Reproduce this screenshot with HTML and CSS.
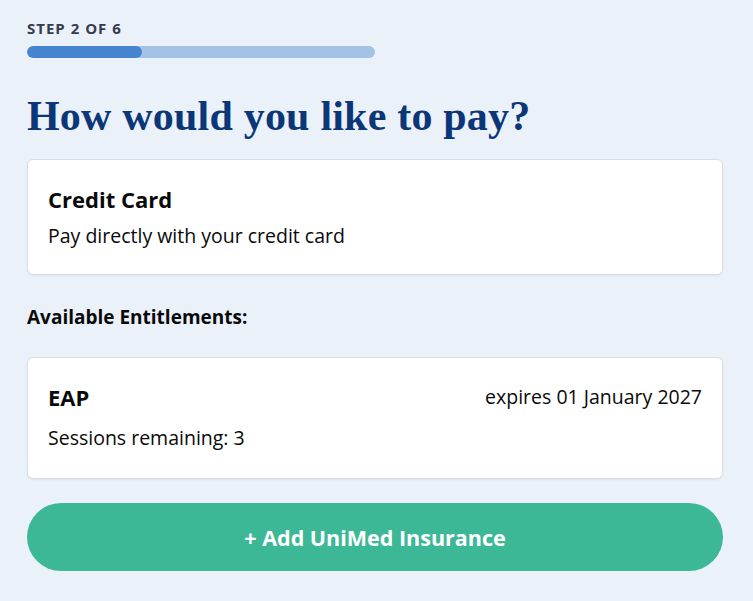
FILE: index.html
```html
<!DOCTYPE html>
<html>
<head>
<meta charset="utf-8">
<link rel="stylesheet" href="styles.css">
</head>
<body>
<main class="page">
  <div class="step-label">STEP 2 OF 6</div>
  <div class="progress"><div class="progress-fill" style="width: 33%"></div></div>
  <h1 class="title">How would you like to pay?</h1>
  <section class="card card-credit">
    <div class="card-title">Credit Card</div>
    <div class="card-text">Pay directly with your credit card</div>
  </section>
  <h2 class="section-label">Available Entitlements:</h2>
  <section class="card card-ent">
    <div class="ent-row">
      <div class="card-title">EAP</div>
      <div class="card-text">expires 01 January 2027</div>
    </div>
    <div class="card-text">Sessions remaining: 3</div>
  </section>
  <button class="add-btn">+ Add UniMed Insurance</button>
</main>
</body>
</html>
```
FILE: styles.css
```css
html, body { margin: 0; padding: 0; }
body {
  background: #ebf1f9;
  font-family: "Open Sans", sans-serif;
  color: #0a0a0a;
}
.page {
  padding: 19px 30px 30px 27px;
  display: flex;
  flex-direction: column;
}
.step-label {
  font-size: 15px;
  font-weight: 700;
  color: #343c4e;
  letter-spacing: 1px;
  line-height: 18px;
}
.progress {
  margin-top: 9px;
  width: 348px;
  height: 12px;
  border-radius: 6px;
  background: #a4c2e6;
  overflow: hidden;
}
.progress-fill {
  height: 100%;
  background: #4784cf;
  border-radius: 6px;
}
.title {
  margin: 34px 0 0;
  font-family: "Liberation Serif", serif;
  font-size: 42px;
  font-weight: 700;
  color: #0b3778;
  line-height: 48px;
  letter-spacing: 0.2px;
}
.card {
  background: #fff;
  border: 1px solid #d9dee5;
  border-radius: 6px;
  box-shadow: 0 1px 2px rgba(0,0,0,0.06);
  padding: 26px 20px;
}
.card-credit { margin-top: 19px; }
.card-title {
  font-size: 22px;
  font-weight: 700;
  line-height: 26px;
}
.card-text {
  font-size: 19.5px;
  line-height: 24px;
}
.card-credit .card-text { margin-top: 12px; }
.section-label {
  margin: 31px 0 0;
  font-size: 19px;
  font-weight: 700;
  line-height: 22px;
}
.card-ent { margin-top: 29px; padding: 26px 20px 28px; }
.ent-row {
  display: flex;
  justify-content: space-between;
  align-items: center;
  margin-bottom: 16px;
}
.add-btn {
  margin-top: 24px;
  height: 68px;
  border: none;
  border-radius: 34px;
  background: #3cb897;
  color: #fff;
  font-family: inherit;
  font-size: 21.5px;
  font-weight: 700;
  cursor: pointer;
}
```
